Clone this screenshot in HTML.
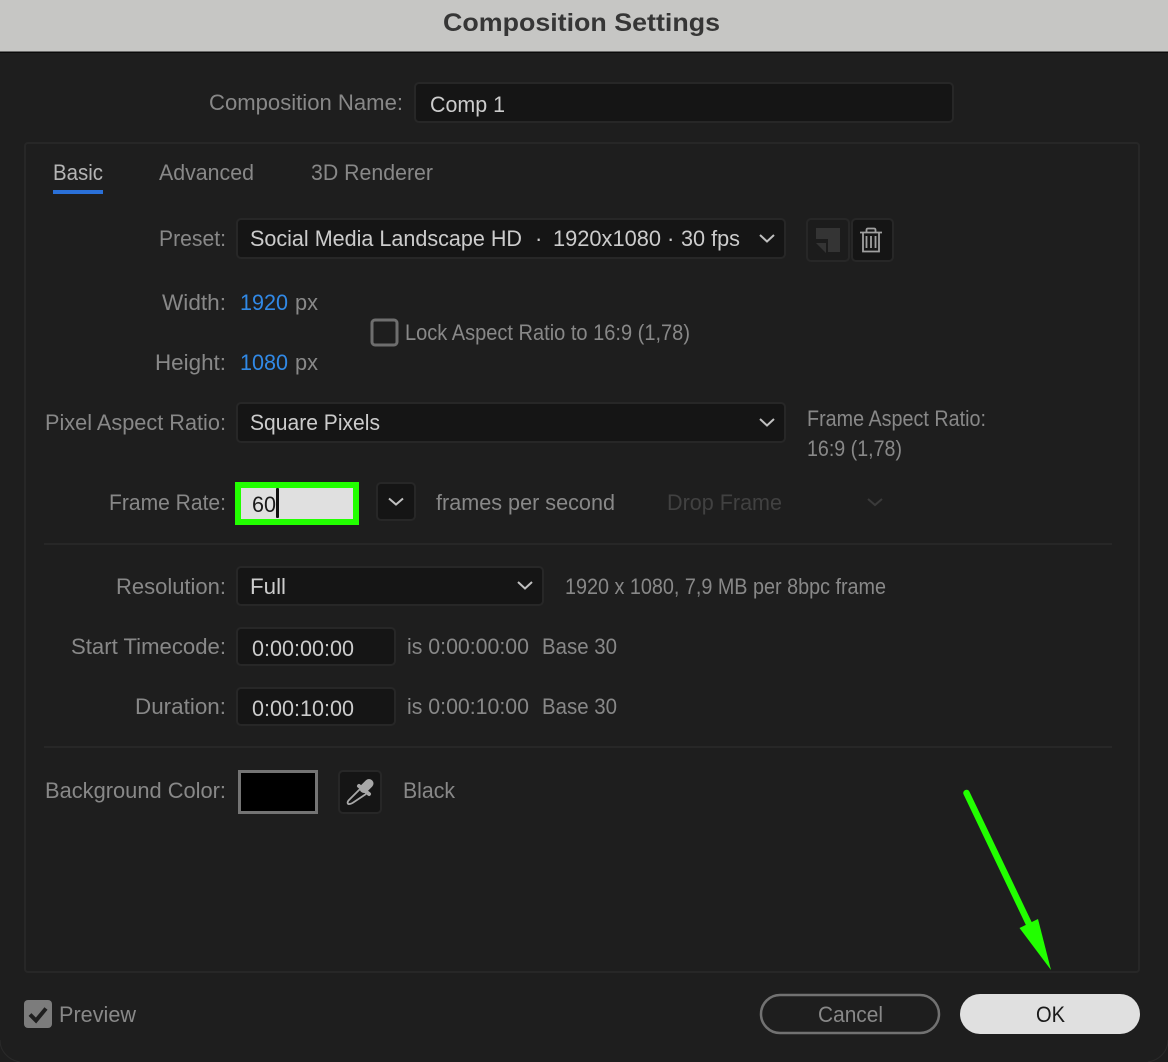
<!DOCTYPE html>
<html><head><meta charset="utf-8"><title>Composition Settings</title>
<style>
html,body{margin:0;padding:0;background:#1e1e1e;width:1168px;height:1062px;overflow:hidden}
svg{display:block}
text{font-family:"Liberation Sans",sans-serif;font-size:22px;fill:#888}
.b{fill:#cccccc}
.f{fill:#151515;stroke:#272727;stroke-width:2}
.c{fill:none;stroke:#c0c0c0;stroke-width:2}
.u{fill:#3189e6}
</style></head><body>
<svg width="1168" height="1062" viewBox="0 0 1168 1062" xmlns="http://www.w3.org/2000/svg">
<rect width="1168" height="1062" fill="#1e1e1e"/>
<rect width="1168" height="52" fill="#c6c6c4"/>
<rect y="51.500" width="1168" height="1.500" fill="#0a0a0a"/>
<text x="443" y="31" textLength="277" lengthAdjust="spacingAndGlyphs" style="font-size:25px;font-weight:bold;fill:#363636">Composition Settings</text>

<text x="209" y="110" textLength="194" lengthAdjust="spacingAndGlyphs">Composition Name:</text>
<rect class="f" x="415" y="83" width="538" height="39" rx="4"/>
<text class="b" x="430" y="112" textLength="75" lengthAdjust="spacingAndGlyphs">Comp 1</text>

<rect x="25" y="143" width="1114" height="829" rx="3" fill="none" stroke="#272727" stroke-width="2"/>
<text class="b" x="53" y="180" textLength="50" lengthAdjust="spacingAndGlyphs" style="fill:#b4b4b4">Basic</text>
<rect x="53" y="190" width="50" height="4" fill="#2a70d8"/>
<text x="159" y="180" textLength="95" lengthAdjust="spacingAndGlyphs">Advanced</text>
<text x="311" y="180" textLength="122" lengthAdjust="spacingAndGlyphs">3D Renderer</text>

<text x="159" y="246" textLength="67" lengthAdjust="spacingAndGlyphs">Preset:</text>
<rect class="f" x="237" y="219" width="548" height="39" rx="4"/>
<text class="b" x="250" y="246" textLength="272" lengthAdjust="spacingAndGlyphs">Social Media Landscape HD</text>
<text class="b" x="535" y="246">·</text>
<text class="b" x="553" y="246" textLength="108" lengthAdjust="spacingAndGlyphs">1920x1080</text>
<text class="b" x="667" y="246">·</text>
<text class="b" x="681" y="246" textLength="59" lengthAdjust="spacingAndGlyphs">30 fps</text>
<path class="c" d="M760 235l7 6.500 7-6.500"/>

<rect x="807" y="219" width="42" height="42" rx="4" fill="#1c1c1c" stroke="#272727" stroke-width="2"/>
<path d="M816 228h24v24h-12v-13h-12z" fill="#343434"/>
<path d="M816 243h10v10z" fill="#343434"/>
<rect x="852" y="219" width="41" height="42" rx="4" class="f"/>
<g fill="none" stroke="#a0a0a0" stroke-width="1.800">
<path d="M860 232.500h22"/>
<path d="M863 233v18.500h16V233"/>
<path d="M866.500 232v-2q0-1.500 1.500-1.500h6q1.500 0 1.500 1.500V232"/>
<path d="M866.500 236v12M871 236v12M875.500 236v12"/>
</g>

<text x="162" y="310" textLength="64" lengthAdjust="spacingAndGlyphs">Width:</text>
<text class="u" x="240" y="310" textLength="48" lengthAdjust="spacingAndGlyphs">1920</text>
<text x="295" y="310" textLength="23" lengthAdjust="spacingAndGlyphs">px</text>
<text x="155" y="370" textLength="71" lengthAdjust="spacingAndGlyphs">Height:</text>
<text class="u" x="240" y="370" textLength="48" lengthAdjust="spacingAndGlyphs">1080</text>
<text x="295" y="370" textLength="23" lengthAdjust="spacingAndGlyphs">px</text>
<rect x="372" y="320" width="25" height="25" rx="3" fill="none" stroke="#6e6e6e" stroke-width="3"/>
<text x="405" y="340" textLength="285" lengthAdjust="spacingAndGlyphs">Lock Aspect Ratio to 16:9 (1,78)</text>

<text x="45" y="430" textLength="181" lengthAdjust="spacingAndGlyphs">Pixel Aspect Ratio:</text>
<rect class="f" x="237" y="403" width="548" height="39" rx="4"/>
<text class="b" x="250" y="430" textLength="130" lengthAdjust="spacingAndGlyphs">Square Pixels</text>
<path class="c" d="M760 419l7 6.500 7-6.500"/>
<text x="807" y="426" textLength="179" lengthAdjust="spacingAndGlyphs">Frame Aspect Ratio:</text>
<text x="807" y="456" textLength="95" lengthAdjust="spacingAndGlyphs">16:9 (1,78)</text>

<text x="109" y="510" textLength="117" lengthAdjust="spacingAndGlyphs">Frame Rate:</text>
<rect x="238" y="485" width="118" height="37" fill="#e0e0e0" stroke="#22ff00" stroke-width="6"/>
<text x="252" y="512" textLength="24" lengthAdjust="spacingAndGlyphs" style="fill:#1a1a1a">60</text>
<rect x="276" y="488" width="3" height="30" rx="1" fill="#111"/>
<rect class="f" x="377" y="483" width="38" height="37" rx="4"/>
<path class="c" d="M389 498.500l7 6 7-6"/>
<text x="436" y="510" textLength="179" lengthAdjust="spacingAndGlyphs">frames per second</text>
<text x="667" y="510" textLength="115" lengthAdjust="spacingAndGlyphs" style="fill:#414141">Drop Frame</text>
<path d="M868 499l7 6 7-6" fill="none" stroke="#3a3a3a" stroke-width="2"/>
<rect x="44" y="543" width="1068" height="2" fill="#272727"/>

<text x="116" y="594" textLength="110" lengthAdjust="spacingAndGlyphs">Resolution:</text>
<rect class="f" x="237" y="567" width="306" height="38" rx="4"/>
<text class="b" x="250" y="594" textLength="36" lengthAdjust="spacingAndGlyphs">Full</text>
<path class="c" d="M518 582l7 6.500 7-6.500"/>
<text x="565" y="594" textLength="321" lengthAdjust="spacingAndGlyphs">1920 x 1080, 7,9 MB per 8bpc frame</text>

<text x="71" y="654" textLength="155" lengthAdjust="spacingAndGlyphs">Start Timecode:</text>
<rect class="f" x="237" y="628" width="158" height="37" rx="4"/>
<text class="b" x="252" y="656" textLength="102" lengthAdjust="spacingAndGlyphs">0:00:00:00</text>
<text x="407" y="654" textLength="122" lengthAdjust="spacingAndGlyphs">is 0:00:00:00</text>
<text x="542" y="654" textLength="75" lengthAdjust="spacingAndGlyphs">Base 30</text>

<text x="135" y="714" textLength="91" lengthAdjust="spacingAndGlyphs">Duration:</text>
<rect class="f" x="237" y="688" width="158" height="37" rx="4"/>
<text class="b" x="252" y="716" textLength="102" lengthAdjust="spacingAndGlyphs">0:00:10:00</text>
<text x="407" y="714" textLength="122" lengthAdjust="spacingAndGlyphs">is 0:00:10:00</text>
<text x="542" y="714" textLength="75" lengthAdjust="spacingAndGlyphs">Base 30</text>
<rect x="44" y="746" width="1068" height="2" fill="#272727"/>

<text x="45" y="798" textLength="181" lengthAdjust="spacingAndGlyphs">Background Color:</text>
<rect x="239.500" y="771.500" width="77" height="41" fill="#000" stroke="#747474" stroke-width="3"/>
<rect class="f" x="339" y="771" width="42" height="42" rx="4"/>
<path d="M369 783.500L364 788.500" stroke="#a8a8a8" stroke-width="9" stroke-linecap="round" fill="none"/>
<path d="M359 786L369 794" stroke="#a8a8a8" stroke-width="4" stroke-linecap="round" fill="none"/>
<path d="M360 789L348.500 800.500c-1.500 2 -1 4 1 3.500c1 0 2-.5 3-1L366 794" fill="none" stroke="#a8a8a8" stroke-width="1.800"/>
<text x="403" y="798" textLength="52" lengthAdjust="spacingAndGlyphs">Black</text>

<rect x="24" y="1000" width="28" height="28" rx="4" fill="#7c7c7c"/>
<path d="M30 1014.500l6 6 10-12" fill="none" stroke="#1e1e1e" stroke-width="4"/>
<text x="59" y="1022" textLength="77" lengthAdjust="spacingAndGlyphs">Preview</text>

<rect x="761" y="995" width="178" height="38" rx="19" fill="none" stroke="#727272" stroke-width="2.500"/>
<text x="818" y="1022" textLength="65" lengthAdjust="spacingAndGlyphs">Cancel</text>
<rect x="960" y="994" width="180" height="40" rx="20" fill="#e0e0e0"/>
<text x="1036" y="1022" textLength="29" lengthAdjust="spacingAndGlyphs" style="fill:#1a1a1a">OK</text>

<path d="M966.500 793L1029 924" stroke="#22ff00" stroke-width="6.500" stroke-linecap="round" fill="none"/>
<path d="M1019.500 928L1038 919L1051 970Z" fill="#22ff00"/>
<path d="M1168 1040a24 22 0 0 1-20 22" fill="none" stroke="#2a2a2a" stroke-width="1"/>
<path d="M0 1040a24 22 0 0 0 20 22" fill="none" stroke="#2a2a2a" stroke-width="1"/>
</svg>
</body></html>
